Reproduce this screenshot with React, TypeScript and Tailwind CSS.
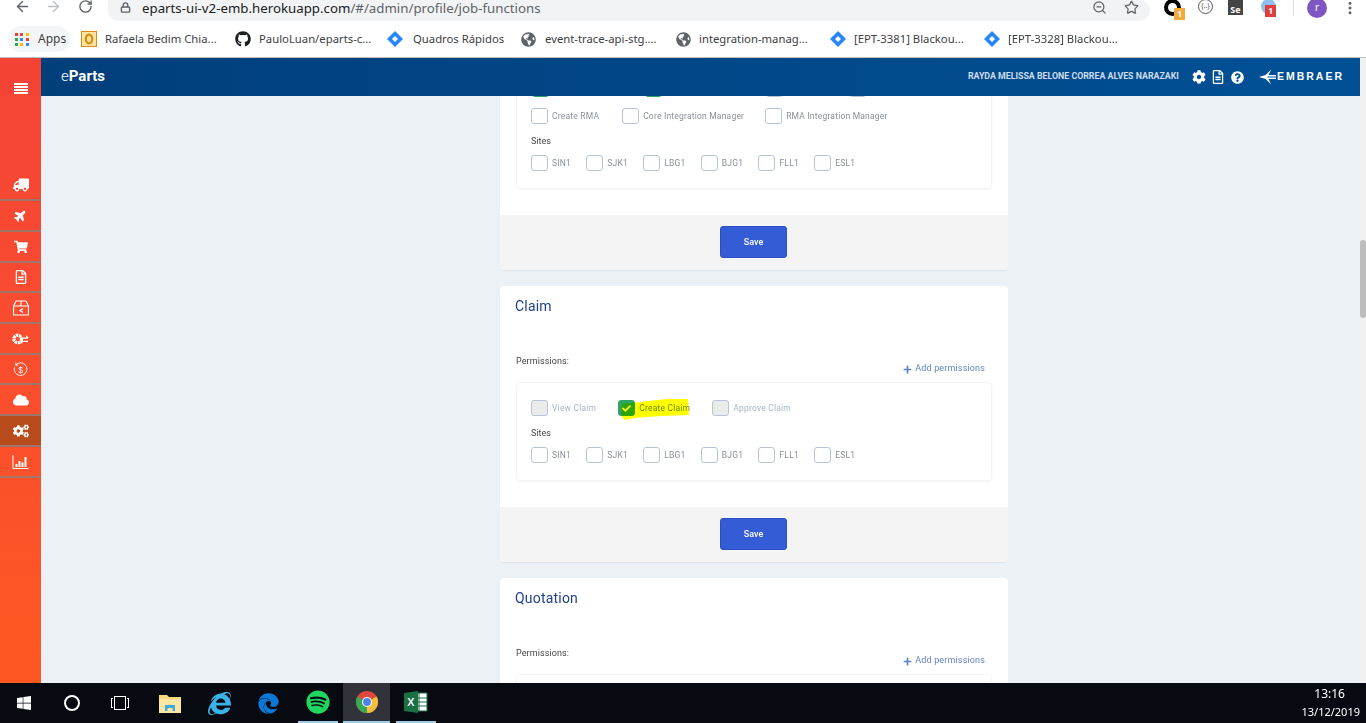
import React from 'react';
import {
  FaTruck, FaPlane, FaShoppingCart, FaRegFileAlt, FaCloud, FaCog, FaCogs, FaQuestionCircle,
  FaGithub, FaGlobeAmericas, FaPlus, FaCheck, FaSpotify, FaEdge, FaInternetExplorer, FaWindows,
} from 'react-icons/fa';
import { ArrowLeft, ArrowRight, RotateCw, Lock, ZoomOut, Star, MoreVertical } from 'lucide-react';

const Jira = () => (
  <svg viewBox="0 0 16 16" className="w-[16px] h-[16px] shrink-0">
    <path d="M8 0 16 8 8 16 0 8Z" fill="#2684ff" />
    <path d="M8 5 11 8 8 11 5 8Z" fill="#fff" />
  </svg>
);

const Outlook = () => (
  <svg viewBox="0 0 16 16" className="w-[16px] h-[16px] shrink-0">
    <rect x="0.5" y="0.5" width="15" height="15" fill="#fbe3a0" stroke="#d98a10" />
    <ellipse cx="8" cy="8" rx="3.2" ry="4.4" fill="none" stroke="#d98a10" strokeWidth="2.2" />
  </svg>
);

const bookmarks = [
  { w: 'w-[154px]', gap: 'gap-[8px]', icon: <Outlook />, text: 'Rafaela Bedim Chia...' },
  { w: 'w-[152px]', gap: 'gap-[8px]', icon: <FaGithub size={16} className="text-[#1b1f23] shrink-0" />, text: 'PauloLuan/eparts-c...' },
  { w: 'w-[134px]', gap: 'gap-[10px]', icon: <Jira />, text: 'Quadros Rápidos' },
  { w: 'w-[155px]', gap: 'gap-[9px]', icon: <FaGlobeAmericas size={15} className="text-[#5f6368] shrink-0" />, text: 'event-trace-api-stg....' },
  { w: 'w-[154px]', gap: 'gap-[8px]', icon: <FaGlobeAmericas size={15} className="text-[#5f6368] shrink-0" />, text: 'integration-manag...' },
  { w: 'w-[154px]', gap: 'gap-[8px]', icon: <Jira />, text: '[EPT-3381] Blackou...' },
  { w: 'w-[154px]', gap: 'gap-[8px]', icon: <Jira />, text: '[EPT-3328] Blackou...' },
];

const BrowserBar = () => (
  <div className="shrink-0 bg-white font-['Noto_Sans',sans-serif]">
    <div className="h-[21px] flex overflow-hidden">
      <div className="w-[108px] flex items-start text-[#5f6368] shrink-0">
        <ArrowLeft size={17} strokeWidth={2} className="ml-[14px] -mt-[2px]" />
        <ArrowRight size={17} strokeWidth={2} className="ml-[14px] -mt-[2px] text-[#bcbfc3]" />
        <RotateCw size={15} strokeWidth={2.2} className="ml-[16px] -mt-[1px]" />
      </div>
      <div className="w-[1042px] h-[21px] rounded-b-[12px] rounded-r-[12px] bg-[#f1f3f4] flex items-start shrink-0">
        <Lock size={11} strokeWidth={3} className="ml-[12px] mt-[2px] text-[#5f6368]" />
        <span className="ml-[11px] -mt-[1px] text-[13.27px] leading-[18px] text-[#5f6368] whitespace-nowrap">
          <span className="text-[#202124]">eparts-ui-v2-emb.herokuapp.com</span>/#/admin/profile/job-functions
        </span>
        <ZoomOut size={15} strokeWidth={2} className="ml-auto mt-0 text-[#5f6368]" />
        <Star size={15} strokeWidth={2} className="ml-[17px] mr-[11px] mt-0 text-[#5f6368]" />
      </div>
      <div className="flex-1 flex items-start">
        <div className="relative ml-[14px] mt-[-1px] w-[17px] h-[17px] rounded-full border-[4px] border-black">
          <span className="absolute left-[6px] top-[5px] w-[11px] h-[12px] bg-[#f4a93c] text-white text-[9px] leading-[12px] text-center font-bold">1</span>
        </div>
        <div className="ml-[17px] mt-[-1px] w-[15px] h-[15px] rounded-full border border-[#555] text-[7px] leading-[12px] text-center text-[#555]">{'{..}'}</div>
        <div className="ml-[15px] -mt-[2px] w-[15px] h-[17px] bg-[#444] text-white text-[9px] leading-[24px] text-center font-bold overflow-hidden">Se</div>
        <div className="relative ml-[18px] -mt-[1px] w-[15px] h-[15px] rounded-full bg-[#8cc0ee]">
          <span className="absolute left-[4px] top-[6px] w-[11px] h-[12px] bg-[#e03e3e] text-white text-[9px] leading-[12px] text-center font-bold">1</span>
        </div>
        <div className="ml-[17px] w-px h-[16px] bg-[#dadce0]" />
        <div className="ml-[13px] -mt-[2px] w-[20px] h-[20px] rounded-full bg-[#7e57c2] text-white text-[10px] leading-[19px] text-center">r</div>
        <MoreVertical size={16} strokeWidth={2.5} className="ml-[15px] text-[#5f6368]" />
      </div>
    </div>
    <div className="h-[37px] flex items-center border-b border-[#bdbdbd] text-[11.3px] text-[#3c4043]">
      <div className="ml-[8px] w-[62px] h-[26px] rounded-full bg-[#f4f5f6] flex items-center pl-[7px] shrink-0">
        <div className="grid grid-cols-3 gap-[2px] w-[14px]">
          {['#ea4335', '#ea4335', '#fbbc04', '#34a853', '#4285f4', '#ea4335', '#34a853', '#fbbc04', '#4285f4'].map((c, i) => (
            <span key={i} className="w-[3px] h-[3px]" style={{ background: c }} />
          ))}
        </div>
        <span className="ml-[9px] text-[12px]">Apps</span>
      </div>
      <div className="ml-[11px] flex">
        {bookmarks.map((b) => (
          <div key={b.text} className={`${b.w} ${b.gap} flex items-center shrink-0 whitespace-nowrap`}>
            {b.icon}
            <span>{b.text}</span>
          </div>
        ))}
      </div>
    </div>
  </div>
);

const GearSwap = () => (
  <svg viewBox="0 0 18 16" className="w-[17px] h-[16px]" fill="none" stroke="#fff">
    <circle cx="6" cy="8" r="4" strokeWidth="3.4" strokeDasharray="2.6 0.7" />
    <path d="M9 7h8M15 4.800l2.200 2.200M17 10.500H9M11 12.700l-2-2.200" strokeWidth="1.3" />
  </svg>
);

const BoxBack = () => (
  <svg viewBox="0 0 16 16" className="w-[16px] h-[16px]" fill="none" stroke="#fff" strokeWidth="1.1">
    <path d="M.6 6h14.800v9H.6ZM.6 6 3 1h10l2.400 5M8 1v5" />
    <path d="M10 8.500 7 10.500l3 2" strokeWidth="1.3" />
  </svg>
);

const MoneyBack = () => (
  <svg viewBox="0 0 16 16" className="w-[15px] h-[15px]" fill="none" stroke="#fff" strokeWidth="1">
    <path d="M3 3.200a6.700 6.700 0 1 1-1.400 2.600M3 .8v2.600h2.600" />
    <text x="8" y="11.500" textAnchor="middle" fontSize="9" fill="#fff" stroke="none" fontFamily="Liberation Sans">$</text>
  </svg>
);

const Bars = () => (
  <svg viewBox="0 0 16 14" className="w-[17px] h-[14px]" fill="#fff">
    <path d="M0 0h1v13h15v1H0Z" />
    <path d="M3 9h2v3H3ZM6 6h2v6H6ZM9 7.500h2V12H9ZM12 2h2v10h-2Z" />
  </svg>
);

const sideItems = [
  { h: 'h-[31px]', icon: <FaTruck size={16} className="-scale-x-100" /> },
  { h: 'h-[31px]', icon: <FaPlane size={13} className="-rotate-45" /> },
  { h: 'h-[31px]', icon: <FaShoppingCart size={14} /> },
  { h: 'h-[30px]', icon: <FaRegFileAlt size={14} /> },
  { h: 'h-[31px]', icon: <BoxBack /> },
  { h: 'h-[31px]', icon: <GearSwap /> },
  { h: 'h-[30px]', icon: <MoneyBack /> },
  { h: 'h-[31px]', icon: <FaCloud size={16} /> },
  { h: 'h-[31px]', icon: <FaCogs size={16} />, active: true },
  { h: 'h-[31px]', icon: <Bars /> },
];

const Sidebar = () => (
  <div className="w-[41px] shrink-0 bg-gradient-to-b from-[#f44336] to-[#ff5722] text-white">
    <div className="h-[112px] pt-[25px] flex flex-col items-center gap-[1px]">
      <span className="w-[14px] h-[2px] bg-white" />
      <span className="w-[14px] h-[2px] bg-white" />
      <span className="w-[14px] h-[2px] bg-white" />
      <span className="w-[14px] h-[2px] bg-white" />
    </div>
    {sideItems.map((it, i) => (
      <div
        key={i}
        className={`${it.h} flex items-center justify-center border-b-2 border-[#a0756a] ${it.active ? 'bg-[#b94c1c]' : ''}`}
      >
        {it.icon}
      </div>
    ))}
  </div>
);

const Check = ({ label, state, className = '' }: { label?: string; state?: 'on' | 'off'; className?: string }) => (
  <label className={`flex items-center shrink-0 ${className}`}>
    <span
      className={`w-[17px] h-[16px] rounded-[3px] border flex items-center justify-center ${
        state === 'on'
          ? 'bg-[#2fa35f] border-[#2fa35f]'
          : state === 'off'
            ? 'bg-[#ebebeb] border-[#b8c4d6]'
            : 'bg-white border-[#b8c4d6]'
      }`}
    >
      {state === 'on' && <FaCheck size={9} className="text-white" />}
    </span>
    {label && (
      <span
        className={`ml-[4px] text-[8.5px] tracking-[0.2px] leading-[16px] whitespace-nowrap ${
          state === 'off' ? 'text-[#a7b5c9]' : state === 'on' ? 'text-[#6f8a7a]' : 'text-[#8a8f98]'
        }`}
      >
        {label}
      </span>
    )}
  </label>
);

const sites = ['SIN1', 'SJK1', 'LBG1', 'BJG1', 'FLL1', 'ESL1'];

const Sites = () => (
  <>
    <div className="mt-[9px] mb-[6px] h-[16px] text-[9px] leading-[16px] text-[#444]">Sites</div>
    <div className="flex gap-[15.3px]">
      {sites.map((s) => (
        <Check key={s} label={s} />
      ))}
    </div>
  </>
);

const SaveBar = () => (
  <div className="h-[55px] mt-[26px] bg-[#f4f4f4] rounded-b-[4px] pt-[11px] pr-[1px] flex justify-center">
    <button className="w-[67px] h-[32px] pt-[1px] rounded-[3px] bg-[#335cd6] border border-[#2a4fc0] text-white text-[9px] font-medium">Save</button>
  </div>
);

const CardHead = ({ title }: { title: string }) => (
  <>
    <div className="pt-[10px] h-[30px] -ml-px text-[14px] leading-[20px] tracking-[0.2px] text-[#1e3f8a]">{title}</div>
    <div className="mt-[37px] mb-[5px] flex justify-between">
      <span className="text-[9px] leading-[16px] text-[#444] tracking-[0.1px]">Permissions:</span>
      <span className="mt-[8px] mr-[7px] h-[16px] flex items-center text-[9px] tracking-[0.15px] text-[#5f84c4]">
        <FaPlus size={9} className="mr-[3px]" />
        Add permissions
      </span>
    </div>
  </>
);

const Box = ({ children, className = '' }: { children: React.ReactNode; className?: string }) => (
  <div className={`w-[476px] rounded-[4px] border border-[#f3f4f6] shadow-[0_1px_2px_rgba(0,0,0,0.04)] px-[14px] pt-[17px] pb-[17px] ${className}`}>
    {children}
  </div>
);

const Content = () => (
  <div className="-mt-[33px] ml-[459px] w-[508px] flex flex-col gap-[16px] font-['Roboto',sans-serif]">
    {/* first card is scrolled under the header */}
    <div className="bg-white rounded-[4px] shadow-[0_1px_1px_rgba(0,0,0,0.06)]">
      <div className="pl-[16px]">
        <Box>
          <div className="flex mb-[11px]">
            <Check state="on" className="ml-[1px]" />
            <Check state="on" className="ml-[96px]" />
            <Check state="off" className="ml-[104px]" />
            <Check state="off" className="ml-[66px]" />
          </div>
          <div className="flex">
            <Check label="Create RMA" />
            <Check label="Core Integration Manager" className="ml-[23px]" />
            <Check label="RMA Integration Manager" className="ml-[21px]" />
          </div>
          <Sites />
        </Box>
      </div>
      <SaveBar />
    </div>

    <div className="bg-white rounded-[4px] shadow-[0_1px_1px_rgba(0,0,0,0.06)]">
      <div className="px-[16px]">
        <CardHead title="Claim" />
        <div className="relative">
          <Box>
            <div className="flex">
              <Check label="View Claim" state="off" />
              <Check label="Create Claim" state="on" className="ml-[22px]" />
              <Check label="Approve Claim" state="off" className="ml-[22px]" />
            </div>
            <Sites />
          </Box>
          {/* yellow marker scribble */}
          <svg viewBox="0 0 68 21" className="absolute left-[106px] top-[17px] w-[68px] h-[21px] mix-blend-multiply">
            <path d="M0 5 18 3 35 1 45 0 66 0 67 16 40 17 12 19 3 21 0 18Z" fill="#ffff00" />
          </svg>
        </div>
      </div>
      <SaveBar />
    </div>

    <div className="bg-white rounded-t-[4px] h-[200px]">
      <div className="px-[16px]">
        <CardHead title="Quotation" />
        <Box className="h-[100px]">
          <div />
        </Box>
      </div>
    </div>
  </div>
);

const Main = () => (
  <div className="flex-1 min-h-0 flex">
    <Sidebar />
    <div className="flex-1 min-w-0 flex flex-col">
      <header className="relative z-10 h-[38px] shrink-0 bg-gradient-to-r from-[#013f7b] to-[#015096] flex items-center text-white font-['Roboto',sans-serif]">
        <span className="ml-[20px] pb-[2px] text-[15px] font-bold"><span className="font-light">e</span>Parts</span>
        <span className="ml-auto text-[8.8px] font-bold text-[#cfdcea] whitespace-nowrap">RAYDA MELISSA BELONE CORREA ALVES NARAZAKI</span>
        <FaCog size={14} className="ml-[13px]" />
        <FaRegFileAlt size={14} className="ml-[5px]" />
        <FaQuestionCircle size={13} className="ml-[6px]" />
        <svg viewBox="0 0 18 16" className="ml-[15px] w-[17px] h-[16px]" fill="#fff">
          <path d="M0 8 7 6 13 0 10 6 18 6 18 7.500 9 7.500 9 8.500 18 8.500 18 10 10 10 13 16 7 10Z" />
        </svg>
        <span className="ml-px mr-[16px] font-['Liberation_Sans',sans-serif] font-bold text-[10.5px] tracking-[2px]">EMBRAER</span>
      </header>
      <div className="flex-1 min-h-0 overflow-hidden bg-[#ecf1f5]">
        <Content />
      </div>
    </div>
    <div className="w-[6px] shrink-0 bg-[#f1f1f1] pt-[182px]">
      <div className="h-[78px] rounded-full bg-[#bdbdbd]" />
    </div>
  </div>
);

const Folder = () => (
  <svg viewBox="0 0 22 20" className="w-[22px] h-[20px]">
    <path d="M0 2h8l2 2h12v16H0Z" fill="#f6d77a" />
    <path d="M0 6h22v14H0Z" fill="#fbe7a3" />
    <path d="M6 12h10v6h-2.500v-3h-5v3H6Z" fill="#3fa9e0" />
  </svg>
);

const Chrome = () => (
  <svg viewBox="0 0 24 24" className="w-[22px] h-[22px]">
    <circle cx="12" cy="12" r="12" fill="#e0483b" />
    <path d="M12 12 1.600 6A12 12 0 0 0 12 24Z" fill="#3aa757" />
    <path d="M12 12 12 24A12 12 0 0 0 22.400 6Z" fill="#f3bf3a" />
    <circle cx="12" cy="12" r="5.500" fill="#fff" />
    <circle cx="12" cy="12" r="4.300" fill="#4a86e8" />
  </svg>
);

const Excel = () => (
  <svg viewBox="0 0 24 22" className="w-[24px] h-[22px]">
    <path d="M8 2h15v18H8Z" fill="#fff" stroke="#1d7044" />
    <path d="M15 2v18M8 7h15M8 11h15M8 15h15" stroke="#1d7044" strokeWidth="1" />
    <path d="M0 2 14 0V22L0 20Z" fill="#1d7044" />
    <text x="7" y="15" textAnchor="middle" fontSize="11" fontWeight="700" fill="#fff" fontFamily="Liberation Sans">X</text>
  </svg>
);

const taskIcons = [
  { w: 'w-[48px]', node: <span className="w-[16px] h-[16px] rounded-full border-[2px] border-white" /> },
  { w: 'w-[48px]', node: (
    <span className="relative w-[12px] h-[14px] border border-white">
      <span className="absolute -left-[4px] top-[1px] w-[2px] h-[10px] border-y border-l border-white" />
      <span className="absolute -right-[4px] top-[1px] w-[2px] h-[10px] border-y border-r border-white" />
    </span>
  ) },
  { w: 'w-[51px]', node: <Folder /> },
  { w: 'w-[49px]', node: <FaInternetExplorer size={23} className="text-[#3ab4e8]" /> },
  { w: 'w-[49px]', node: <FaEdge size={21} className="text-[#0a78d7]" /> },
];

const Taskbar = () => (
  <div className="h-[40px] shrink-0 bg-[#070a10] flex items-center font-['Noto_Sans',sans-serif]">
    <div className="w-[48px] flex justify-center">
      <FaWindows size={16} className="text-white" />
    </div>
    {taskIcons.map((t, i) => (
      <div key={i} className={`${t.w} flex items-center justify-center`}>
        {t.node}
      </div>
    ))}
    <div className="w-[50px] flex justify-center">
      <div className="w-[40px] h-[40px] border-b-2 border-[#9ccbe6] flex items-center justify-center">
        <FaSpotify size={24} className="text-[#1ed760]" />
      </div>
    </div>
    <div className="w-[47px] h-[40px] bg-[#31323a] border-b-2 border-[#9ccbe6] flex items-center justify-center">
      <Chrome />
    </div>
    <div className="ml-[6px] w-[40px] h-[40px] border-b-2 border-[#9ccbe6] flex items-center justify-center">
      <Excel />
    </div>
    <div className="ml-auto mr-[6px] text-white text-[11px] leading-[18px] text-right whitespace-nowrap">
      <div className="mr-[15px] text-[12px]">13:16</div>
      <div>13/12/2019</div>
    </div>
  </div>
);

export default function App() {
  return (
    <div className="w-[1366px] h-[723px] flex flex-col overflow-hidden">
      <BrowserBar />
      <Main />
      <Taskbar />
    </div>
  );
}
